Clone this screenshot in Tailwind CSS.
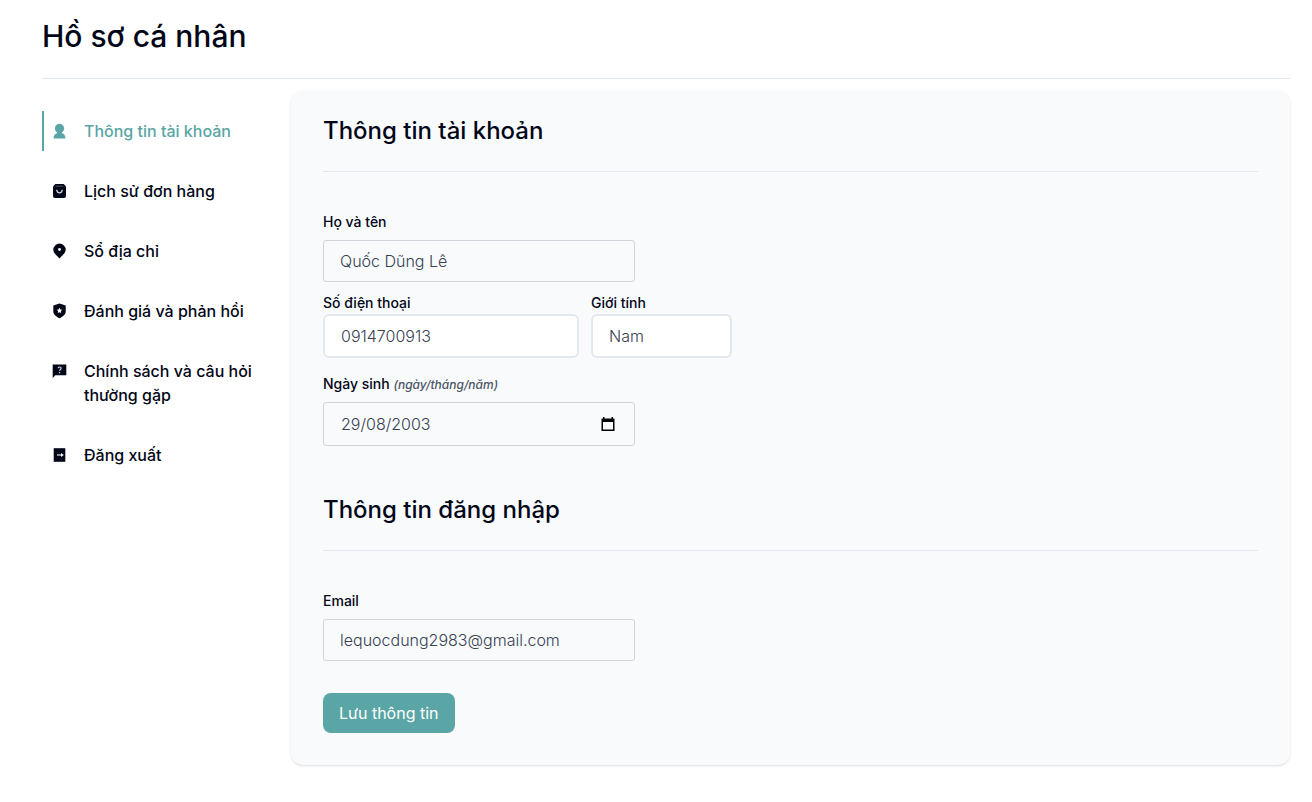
<!DOCTYPE html>
<html lang="vi">
<head>
<meta charset="utf-8">
<meta name="viewport" content="width=device-width, initial-scale=1">
<title>Hồ sơ cá nhân</title>
<script src="https://cdn.jsdelivr.net/npm/@tailwindcss/browser@4"></script>
</head>
<body class="bg-white font-['Inter',sans-serif] text-[#020617]">
<div class="pl-[42px] pr-[22px] pt-4 pb-8">
  <h1 class="border-b border-[#e2e8f0] pb-[22px] text-3xl leading-10 font-medium">Hồ sơ cá nhân</h1>
  <div class="flex items-start pt-3">
    <nav class="w-[249px] shrink-0 pt-5 font-medium" aria-label="Hồ sơ">
      <ul class="flex flex-col gap-5">
        <li><a href="#" aria-current="page" class="flex items-start border-l-2 border-[#5aa5a5] py-2 pl-2 text-[#5aa5a5]">
          <svg class="my-1 size-4 shrink-0" viewBox="0 0 16 16" fill="currentColor" aria-hidden="true"><circle cx="7.5" cy="5.4" r="4.6"/><path d="M5 8.800h5v1.400c2 .500 3.500 2.300 3.500 5.300H1.500c0-3 1.500-4.800 3.500-5.300Z"/></svg>
          <span class="ml-4">Thông tin tài khoản</span></a></li>
        <li><a href="#" class="flex items-start border-l-2 border-transparent py-2 pl-2">
          <svg class="my-1 size-4 shrink-0" viewBox="0 0 16 16" aria-hidden="true"><path d="M3.300 1h8.400l2.300 2.500V13a2 2 0 0 1-2 2H3a2 2 0 0 1-2-2V3.500Z" fill="currentColor"/><path d="M3.500 3.200h8" stroke="#64748b" stroke-width=".7"/><path d="M4.800 6.800c0 4 5.400 4 5.400 0" fill="none" stroke="#cbd5e1" stroke-width="1.300"/></svg>
          <span class="ml-4">Lịch sử đơn hàng</span></a></li>
        <li><a href="#" class="flex items-start border-l-2 border-transparent py-2 pl-2">
          <svg class="my-1 size-4 shrink-0" viewBox="0 0 16 16" aria-hidden="true"><path d="M7.500 15.500C5.500 12.800 1.300 10.500 1.300 6.800a6.200 6.200 0 0 1 12.400 0c0 3.700-4.200 6-6.200 8.700Z" fill="currentColor"/><circle cx="7.500" cy="6.500" r="1.400" fill="white"/></svg>
          <span class="ml-4">Sổ địa chỉ</span></a></li>
        <li><a href="#" class="flex items-start border-l-2 border-transparent py-2 pl-2">
          <svg class="my-1 size-4 shrink-0" viewBox="0 0 16 16" aria-hidden="true"><path d="M7.500.5 13.700 2.500v6c0 3.300-3.200 5.300-6.200 6.800-3-1.500-6.200-3.500-6.200-6.800v-6Z" fill="currentColor"/><path d="m7.500 4.700.9 1.700 1.900.3-1.400 1.400.3 1.900-1.700-.8-1.700.8.3-1.900-1.400-1.400 1.900-.3Z" fill="white"/></svg>
          <span class="ml-4">Đánh giá và phản hồi</span></a></li>
        <li><a href="#" class="flex items-start border-l-2 border-transparent py-2 pl-2">
          <svg class="my-1 size-4 shrink-0" viewBox="0 0 16 16" aria-hidden="true"><path d="M.700 1.500h13.600v10.800H3.300L.700 15Z" fill="currentColor"/><path d="M6 5.200c.2-1.700 3.300-1.500 3.100.2-.1 1-1.500 1.200-1.500 2.400M7.600 9v1.200" fill="none" stroke="#cbd5e1" stroke-width="1.200"/></svg>
          <span class="ml-4">Chính sách và câu hỏi thường gặp</span></a></li>
        <li><a href="#" class="flex items-start border-l-2 border-transparent py-2 pl-2">
          <svg class="my-1 size-4 shrink-0" viewBox="0 0 16 16" aria-hidden="true"><path d="M1.700 1.200h11.600v13.600H1.700Z" fill="currentColor"/><path d="M5 8h5" stroke="white" stroke-width="1.100"/><path d="m9 6 2.800 2L9 10Z" fill="white"/></svg>
          <span class="ml-4">Đăng xuất</span></a></li>
      </ul>
    </nav>
    <main class="min-w-0 flex-1 rounded-xl bg-[#f8fafc] px-8 pt-6 pb-8 shadow-sm">
      <form>
        <h2 class="border-b border-[#e2e8f0] pb-6 text-2xl leading-8 font-medium">Thông tin tài khoản</h2>
        <div class="pt-10">
          <label for="name" class="block text-sm leading-5 font-medium">Họ và tên</label>
          <input id="name" type="text" value="Quốc Dũng Lê" class="mt-2 block h-[42px] w-78 rounded-[3px] border border-[#d1d5db] bg-transparent px-4 font-light text-[#374151]">
        </div>
        <div class="flex gap-3 pt-[11px]">
          <div>
            <label for="phone" class="block text-sm leading-5 font-medium">Số điện thoại</label>
            <input id="phone" type="tel" value="0914700913" class="mt-px block h-11 w-64 rounded-md border-2 border-[#e2e8f0] bg-white px-4 font-light text-[#374151]">
          </div>
          <div>
            <label for="gender" class="block text-sm leading-5 font-medium">Giới tính</label>
            <select id="gender" class="mt-px block h-11 w-[141px] appearance-none rounded-md border-2 border-[#e2e8f0] bg-white px-4 font-light text-[#374151]"><option>Nam</option><option>Nữ</option></select>
          </div>
        </div>
        <div class="pt-4">
          <label for="birthday" class="block text-sm leading-5 font-medium">Ngày sinh <span class="text-xs text-[#4b5563] italic">(ngày/tháng/năm)</span></label>
          <div class="mt-2 flex h-11 w-78 items-center rounded-[3px] border border-[#d1d5db] pr-[18px] pl-[17px]">
            <input id="birthday" type="text" inputmode="numeric" value="29/08/2003" class="min-w-0 flex-1 bg-transparent font-light text-[#374151]">
            <button type="button" aria-label="Chọn ngày" class="text-black"><svg class="size-4" viewBox="0 0 16 16" aria-hidden="true"><path d="M3 1h1.500v1.500h7V1H13v1.500h1.500V15h-13V2.500H3ZM3 6v7.500h10V6Z" fill="currentColor" fill-rule="evenodd"/></svg></button>
          </div>
        </div>
        <h2 class="mt-12 border-b border-[#e2e8f0] pb-6 text-2xl leading-8 font-medium">Thông tin đăng nhập</h2>
        <div class="pt-10">
          <label for="email" class="block text-sm leading-5 font-medium">Email</label>
          <input id="email" type="email" value="lequocdung2983@gmail.com" class="mt-2 block h-[42px] w-78 rounded-[3px] border border-[#d1d5db] bg-transparent px-4 font-light text-[#374151]">
        </div>
        <button type="submit" class="mt-8 block h-10 rounded-lg bg-[#5aa5a5] px-4 text-white">Lưu thông tin</button>
      </form>
    </main>
  </div>
</div>
</body>
</html>
